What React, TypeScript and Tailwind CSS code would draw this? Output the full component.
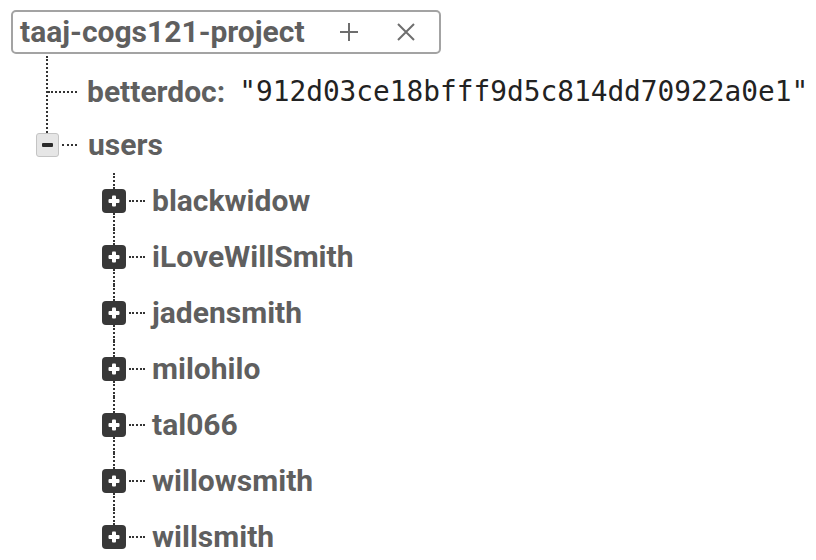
import React from "react";

const users = [
  "blackwidow",
  "iLoveWillSmith",
  "jadensmith",
  "milohilo",
  "tal066",
  "willowsmith",
  "willsmith",
];

const labelCls = "font-bold text-[30px] leading-none text-[#5f5f5f]";

function PlusBox() {
  return (
    <div className="flex h-[24px] w-[24px] items-center justify-center rounded-[4px] bg-[#383838]">
      <svg width="12" height="12" viewBox="0 0 12 12">
        <rect x="4" y="0.5" width="4" height="11" rx="1" fill="#fff" />
        <rect x="0.5" y="4" width="11" height="4" rx="1" fill="#fff" />
      </svg>
    </div>
  );
}

export default function App() {
  return (
    <div
      className="h-[560px] w-[816px] overflow-hidden bg-white"
      style={{ fontFamily: "Roboto, 'Liberation Sans', sans-serif" }}
    >
      <div className="pt-[10px] pl-[11px]">
        <div className="inline-flex h-[44px] w-[430px] items-center rounded-[5px] border-2 border-[#a3a3a3] pl-[7px]">
          <span className={labelCls}>taaj-cogs121-project</span>
          <svg className="ml-[34px]" width="20" height="20" viewBox="0 0 20 20">
            <path d="M10 1v18M1 10h18" stroke="#6e6e6e" strokeWidth="2" />
          </svg>
          <svg className="ml-[38px]" width="18" height="18" viewBox="0 0 18 18">
            <path d="M1 1l16 16M17 1L1 17" stroke="#6e6e6e" strokeWidth="2" />
          </svg>
        </div>
      </div>

      <div className="ml-[46px] mt-[2px] flex h-[77px] border-l-2 border-dotted border-[#333]">
        <div className="flex h-[72px] items-center">
          <span className="w-[29px] border-t-2 border-dotted border-[#333]" />
          <span className={`${labelCls} ml-[10px]`}>betterdoc:</span>
          <span
            className="ml-[14px] text-[27.8px] leading-none text-[#222]"
            style={{ fontFamily: "'DejaVu Sans Mono', 'Liberation Mono', monospace" }}
          >
            "912d03ce18bfff9d5c814dd70922a0e1"
          </span>
        </div>
      </div>

      <div className="ml-[36px] flex h-[24px] items-center">
        <div className="flex h-[24px] w-[23px] items-center justify-center rounded-[3px] border border-[#c4c4c4] bg-[#e6e6e6]">
          <div className="h-[4px] w-[11px] rounded-[1px] bg-[#2a2a2a]" />
        </div>
        <span className="ml-[3px] w-[15px] border-t-2 border-dotted border-[#333]" />
        <span className={`${labelCls} ml-[11px]`}>users</span>
      </div>

      <div className="mt-[16px]">
        {users.map((u, i) => (
          <div key={u} className="ml-[102px] flex h-[56px] items-center">
            <div className="flex h-full w-[24px] flex-col items-center">
              <div className="w-0 flex-1 border-l-2 border-dotted border-[#333]" />
              <PlusBox />
              <div
                className={`w-0 flex-1 border-l-2 border-dotted ${
                  i === users.length - 1 ? "border-transparent" : "border-[#333]"
                }`}
              />
            </div>
            <span className="ml-[3px] w-[16px] border-t-2 border-dotted border-[#333]" />
            <span className={`${labelCls} ml-[7px]`}>{u}</span>
          </div>
        ))}
      </div>
    </div>
  );
}
